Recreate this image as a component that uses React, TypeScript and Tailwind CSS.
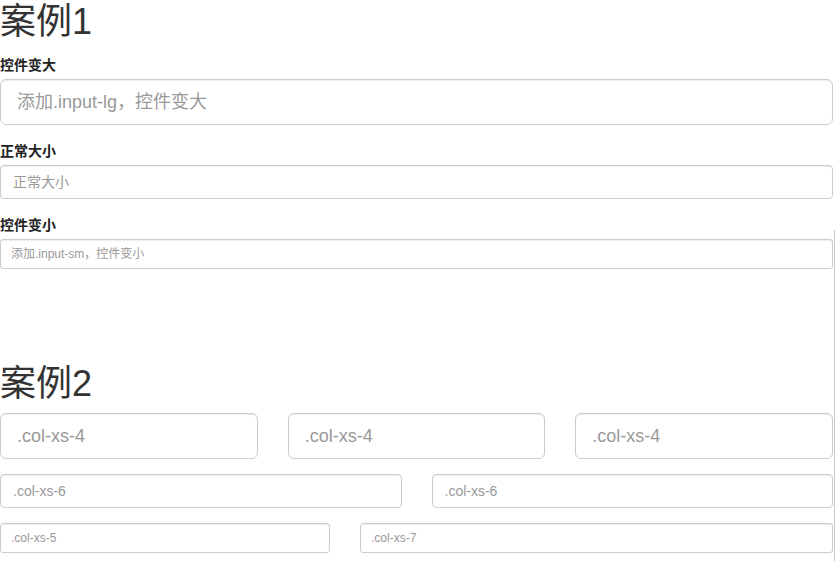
import React from "react";

const font = "font-['Liberation_Sans','Noto_Sans_CJK_SC',sans-serif]";

// bootstrap-ish sizes: lg / normal / sm
const sizeClass: Record<string, string> = {
  lg: "h-[46px] px-4 text-[18px] rounded-[6px]",
  md: "h-[34px] px-3 text-[14px] rounded-[4px]",
  sm: "h-[30px] px-[10px] text-[12px] rounded-[3px]",
};

function Input({ size, placeholder }: { size: "lg" | "md" | "sm"; placeholder: string }) {
  return (
    <input
      type="text"
      placeholder={placeholder}
      className={`block w-full border border-[#ccc] bg-white text-[#555] placeholder:text-[#999] shadow-[inset_0_1px_1px_rgba(0,0,0,0.075)] outline-none ${font} ${sizeClass[size]}`}
    />
  );
}

function Label({ children }: { children: React.ReactNode }) {
  return (
    <label className="block mb-[5px] text-[14px] leading-[20px] font-bold text-[#222] font-['Noto_Sans_CJK_SC',serif]">
      {children}
    </label>
  );
}

export default function App() {
  return (
    <div className={`relative w-[836px] h-[561px] overflow-hidden bg-white text-[#333] ${font}`}>
      <div className="w-[833px]">
        <h1 className="mt-[2px] text-[36px] leading-[40px] font-normal mb-[12px]">案例1</h1>

        <div className="mb-[15px]">
          <Label>控件变大</Label>
          <Input size="lg" placeholder="添加.input-lg，控件变大" />
        </div>
        <div className="mb-[15px]">
          <Label>正常大小</Label>
          <Input size="md" placeholder="正常大小" />
        </div>
        <div>
          <Label>控件变小</Label>
          <Input size="sm" placeholder="添加.input-sm，控件变小" />
        </div>

        <h1 className="mt-[95px] text-[36px] leading-[40px] font-normal mb-[9px]">案例2</h1>

        <div className="grid grid-cols-3 gap-x-[30px] mb-[15px]">
          <Input size="lg" placeholder=".col-xs-4" />
          <Input size="lg" placeholder=".col-xs-4" />
          <Input size="lg" placeholder=".col-xs-4" />
        </div>
        <div className="grid grid-cols-2 gap-x-[30px] mb-[15px]">
          <Input size="md" placeholder=".col-xs-6" />
          <Input size="md" placeholder=".col-xs-6" />
        </div>
        <div className="grid grid-cols-[330px_1fr] gap-x-[30px]">
          <Input size="sm" placeholder=".col-xs-5" />
          <Input size="sm" placeholder=".col-xs-7" />
        </div>
      </div>

      {/* scrollbar edge */}
      <div className="absolute right-[1px] top-[230px] bottom-0 w-px bg-[#c8c8c8]" />
    </div>
  );
}
